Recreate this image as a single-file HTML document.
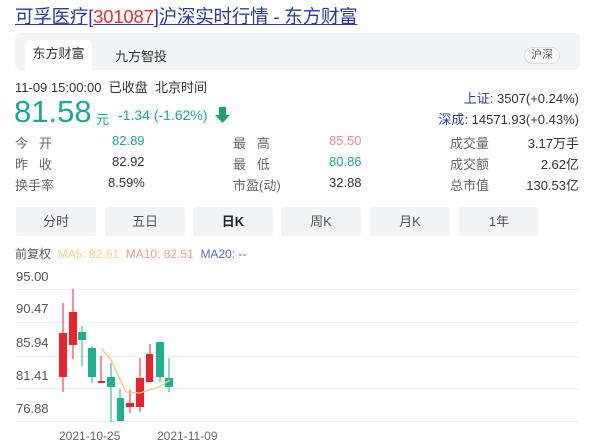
<!DOCTYPE html>
<html><head><meta charset="utf-8"><style>
*{margin:0;padding:0;box-sizing:border-box}
body{width:600px;height:448px;background:#fff;font-family:"Liberation Sans","Noto Sans CJK SC",sans-serif;position:relative;overflow:hidden;color:#333}
.a{position:absolute;white-space:nowrap}
.title{left:15px;top:3px;font-size:18.5px;color:#2b3a9b;text-decoration:underline;letter-spacing:-0.2px}
.title span{color:#d33}
.bar{left:15px;top:33px;width:565px;height:37px;background:#f3f4f6;border-radius:6px}
.tab{left:25px;top:40px;width:67px;height:30px;background:#fff;border-radius:4px 4px 0 0;font-size:13px;text-align:center;line-height:28px;color:#333}
.g{color:#1ea69a}.r{color:#e58b8b}
.lab{font-size:13px;color:#666}
.btn{top:207px;height:29px;width:80px;background:#f3f4f6;border-radius:3px;font-size:13px;text-align:center;line-height:29px;color:#555}
.ax{font-size:13px;color:#555;left:16px}
.grid{left:15px;width:565px;height:1px;background:#eee}
</style></head><body>
<div class="a title">可孚医疗[<span>301087</span>]沪深实时行情 - 东方财富</div>
<div class="a bar"></div>
<div class="a tab">东方财富</div>
<div class="a" style="left:115px;top:46px;font-size:13px;color:#333">九方智投</div>
<div class="a" style="left:524px;top:47px;width:36px;height:17px;border:1px solid #ddd;border-radius:9px;background:#fafafa;font-size:11px;text-align:center;line-height:15px;color:#555">沪深</div>
<div class="a" style="left:15px;top:77px;font-size:13px;color:#333">11-09 15:00:00 &nbsp;已收盘 &nbsp;北京时间</div>
<div class="a g" style="left:14px;top:94px;font-size:31px;line-height:36px">81.58</div>
<div class="a g" style="left:96px;top:109px;font-size:13px">元</div>
<div class="a g" style="left:118px;top:107px;font-size:14px">-1.34 (-1.62%)</div>
<svg class="a" style="left:215px;top:106px" width="15" height="18"><path d="M4 1h7v8h4L7.5 17 0 9h4z" fill="#1f9e6e"/></svg>
<div class="a" style="right:21px;top:88px;font-size:13px;color:#333"><span style="color:#2b3a9b">上证</span>: 3507(+0.24%)</div>
<div class="a" style="right:21px;top:109px;font-size:13px;color:#333"><span style="color:#2b3a9b">深成</span>: 14571.93(+0.43%)</div>
<div class="a lab" style="left:15px;top:133px">今 &nbsp;&nbsp;开</div>
<div class="a lab" style="left:15px;top:154px">昨 &nbsp;&nbsp;收</div>
<div class="a lab" style="left:15px;top:175px">换手率</div>
<div class="a g" style="left:112px;top:133px;font-size:13px">82.89</div>
<div class="a" style="left:112px;top:154px;font-size:13px">82.92</div>
<div class="a" style="left:108px;top:175px;font-size:13px">8.59%</div>
<div class="a lab" style="left:233px;top:133px">最 &nbsp;&nbsp;高</div>
<div class="a lab" style="left:233px;top:154px">最 &nbsp;&nbsp;低</div>
<div class="a lab" style="left:233px;top:175px">市盈(动)</div>
<div class="a r" style="left:329px;top:133px;font-size:13px">85.50</div>
<div class="a g" style="left:329px;top:154px;font-size:13px">80.86</div>
<div class="a" style="left:329px;top:175px;font-size:13px">32.88</div>
<div class="a lab" style="left:450px;top:133px">成交量</div>
<div class="a lab" style="left:450px;top:154px">成交额</div>
<div class="a lab" style="left:450px;top:175px">总市值</div>
<div class="a" style="right:21px;top:133px;font-size:13px">3.17万手</div>
<div class="a" style="right:21px;top:154px;font-size:13px">2.62亿</div>
<div class="a" style="right:21px;top:175px;font-size:13px">130.53亿</div>
<div class="a btn" style="left:16px">分时</div>
<div class="a btn" style="left:105px">五日</div>
<div class="a btn" style="left:193px;color:#222;font-weight:bold">日K</div>
<div class="a btn" style="left:281px">周K</div>
<div class="a btn" style="left:370px">月K</div>
<div class="a btn" style="left:459px">1年</div>
<div class="a" style="left:15px;top:245px;font-size:12px;color:#555">前复权 &nbsp;<span style="color:#f0d08a">MA5: 82.61</span> &nbsp;<span style="color:#eda08a">MA10: 82.51</span> &nbsp;<span style="color:#5a6ac0">MA20: --</span></div>
<div class="a ax" style="top:269px">95.00</div>
<div class="a ax" style="top:301px">90.47</div>
<div class="a ax" style="top:335px">85.94</div>
<div class="a ax" style="top:368px">81.41</div>
<div class="a ax" style="top:401px">76.88</div>
<div class="a grid" style="top:289px"></div>
<div class="a grid" style="top:322px"></div>
<div class="a grid" style="top:356px"></div>
<div class="a grid" style="top:388px"></div>
<div class="a grid" style="top:421px"></div>
<svg class="a" style="left:0;top:0" width="600" height="448">
<g stroke-width="1">
<line x1="63" y1="303" x2="63" y2="392" stroke="#e8232b"/><rect x="59" y="333" width="8" height="44" fill="#e8232b"/>
<line x1="73" y1="289" x2="73" y2="359" stroke="#e8232b"/><rect x="69" y="312" width="8" height="33" fill="#e8232b"/>
<line x1="82" y1="326" x2="82" y2="366" stroke="#1fb092"/><rect x="78" y="332" width="8" height="8" fill="#1fb092"/>
<line x1="92" y1="346" x2="92" y2="383" stroke="#1fb092"/><rect x="88" y="348" width="8" height="29" fill="#1fb092"/>
<line x1="101" y1="356" x2="101" y2="383" stroke="#e8232b"/><rect x="98" y="381" width="7" height="2" fill="#e8232b"/>
<line x1="111" y1="363" x2="111" y2="422" stroke="#1fb092"/><rect x="107" y="377" width="8" height="10" fill="#1fb092"/>
<line x1="120" y1="389" x2="120" y2="421" stroke="#1fb092"/><rect x="117" y="398" width="7" height="23" fill="#1fb092"/>
<line x1="130" y1="390" x2="130" y2="413" stroke="#e8232b"/><rect x="126" y="403" width="8" height="4" fill="#e8232b"/>
<line x1="140" y1="358" x2="140" y2="412" stroke="#e8232b"/><rect x="136" y="378" width="8" height="29" fill="#e8232b"/>
<line x1="150" y1="344" x2="150" y2="382" stroke="#e8232b"/><rect x="146" y="354" width="7" height="28" fill="#e8232b"/>
<line x1="160" y1="342" x2="160" y2="382" stroke="#1fb092"/><rect x="156" y="342" width="8" height="35" fill="#1fb092"/>
<line x1="169" y1="358" x2="169" y2="392" stroke="#1fb092"/><rect x="165" y="378" width="8" height="9" fill="#1fb092"/>
</g>
<polyline points="101,348 111,360 126,392 140,393 159,387 170,380" fill="none" stroke="#f0c888" stroke-width="1.3"/>
</svg>
<div class="a" style="left:59px;top:429px;font-size:12px;color:#666">2021-10-25</div>
<div class="a" style="left:157px;top:429px;font-size:12px;color:#666">2021-11-09</div>
</body></html>
